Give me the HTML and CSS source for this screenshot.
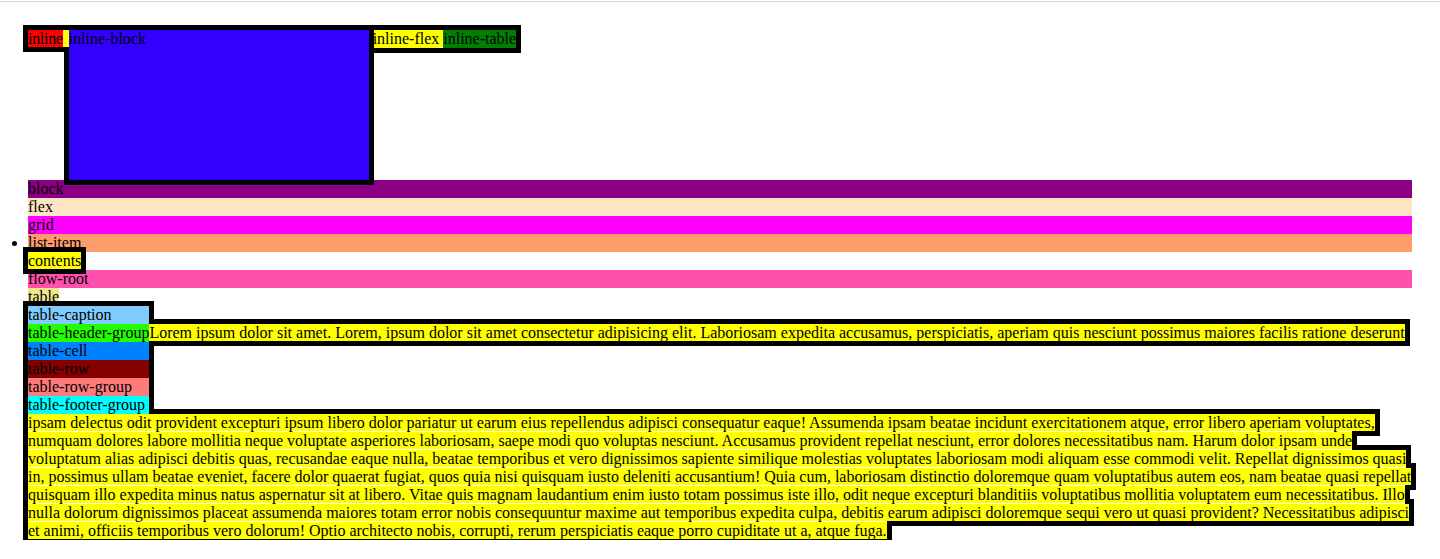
FILE: index.html
```html
<!DOCTYPE html>
<html lang="en">
<head>
<meta charset="utf-8">
<title>CSS display values</title>
<link rel="stylesheet" href="styles.css">
</head>
<body>
<div class="topline"></div>
<main class="page">
  <div class="inline-row"><span class="hl"><span class="d-inline">inline</span><span class="gap"> </span><span class="d-inline-block">inline-block</span> <span class="d-inline-flex">inline-flex</span> <span class="d-inline-table">inline-table</span></span></div>
  <div class="d-block">block</div>
  <div class="d-flex">flex</div>
  <div class="d-grid">grid</div>
  <div class="d-list-item">list-item</div>
  <div class="d-contents"><span class="hl">contents</span></div>
  <div class="d-flow-root">flow-root</div>
  <div class="d-table">table</div>
  <div class="table-area">
    <div class="tcol">
      <div class="trow c-caption">table-caption</div>
      <div class="trow c-header">table-header-group</div>
      <div class="trow c-cell">table-cell</div>
      <div class="trow c-row">table-row</div>
      <div class="trow c-rowgroup">table-row-group</div>
      <div class="trow c-footer">table-footer-group</div>
    </div>
    <div class="tlorem"><span class="hl rel">Lorem ipsum dolor sit amet. Lorem, ipsum dolor sit amet consectetur adipisicing elit. Laboriosam expedita accusamus, perspiciatis, aperiam quis nesciunt possimus maiores facilis ratione deserunt</span></div>
  </div>
  <div class="para"><span class="hl rel">ipsam delectus odit provident excepturi ipsum libero dolor pariatur ut earum eius repellendus adipisci consequatur eaque! Assumenda ipsam beatae incidunt exercitationem atque, error libero aperiam voluptates,<br>numquam dolores labore mollitia neque voluptate asperiores laboriosam, saepe modi quo voluptas nesciunt. Accusamus provident repellat nesciunt, error dolores necessitatibus nam. Harum dolor ipsam unde<br>voluptatum alias adipisci debitis quas, recusandae eaque nulla, beatae temporibus et vero dignissimos sapiente similique molestias voluptates laboriosam modi aliquam esse commodi velit. Repellat dignissimos quasi<br>in, possimus ullam beatae eveniet, facere dolor quaerat fugiat, quos quia nisi quisquam iusto deleniti accusantium! Quia cum, laboriosam distinctio doloremque quam voluptatibus autem eos, nam beatae quasi repellat<br>quisquam illo expedita minus natus aspernatur sit at libero. Vitae quis magnam laudantium enim iusto totam possimus iste illo, odit neque excepturi blanditiis voluptatibus mollitia voluptatem eum necessitatibus. Illo<br>nulla dolorum dignissimos placeat assumenda maiores totam error nobis consequuntur maxime aut temporibus expedita culpa, debitis earum adipisci doloremque sequi vero ut quasi provident? Necessitatibus adipisci<br>et animi, officiis temporibus vero dolorum! Optio architecto nobis, corrupti, rerum perspiciatis eaque porro cupiditate ut a, atque fuga.</span></div>
</main>
</body>
</html>
```
FILE: styles.css
```css
html, body {
  margin: 0;
  background: #fff;
}

body {
  font-family: "Liberation Serif", "Times New Roman", serif;
  font-size: 16px;
  line-height: 18px;
  color: #000;
}

.topline {
  height: 1px;
  margin-top: 1px;
  background: #d6d6d6;
}

.page {
  padding: 28px 28px 0;
}

.hl {
  background: #ffff00;
  outline: 5px solid #000;
}

.rel {
  position: relative;
}

/* first line: inline-level values */
.d-inline {
  position: relative;
  z-index: 2;
  background: #ff0000;
  letter-spacing: -0.3px;
}

.gap {
  position: relative;
  z-index: 2;
  background: #ffff00;
  padding-right: 2px;
}

.d-inline-block {
  display: inline-block;
  position: relative;
  width: 300px;
  height: 150px;
  background: #3300ff;
  outline: 5px solid #000;
}

.d-inline-flex {
  display: inline-flex;
  background: #ffff00;
}

.d-inline-table {
  display: inline-table;
  background: #008000;
}

/* block-level rows */
.d-block {
  background: #8b0082;
}

.d-flex {
  display: flex;
  background: #ffe4c4;
}

.d-grid {
  display: grid;
  background: #ff00ff;
}

.d-list-item {
  display: list-item;
  list-style: disc outside;
  background: #ff9c6c;
}

.d-flow-root {
  display: flow-root;
  background: #ff50ae;
}

.d-table {
  display: table;
  background: #f0e68c;
}

/* table-ish area */
.table-area {
  display: flex;
  align-items: flex-start;
}

.tcol {
  position: relative;
  flex: none;
  outline: 5px solid #000;
}

.trow {
  position: relative;
  z-index: 1;
  white-space: nowrap;
}

.c-caption { background: #80ccff; }
.c-header { background: #20ff00; }
.c-cell { background: #0082ff; }
.c-row { background: #860000; }
.c-rowgroup { background: #ff7b7b; }
.c-footer { background: #00ffff; }

.tlorem {
  flex: 1;
  min-width: 0;
  padding-top: 18px;
  white-space: nowrap;
}

.para {
  white-space: nowrap;
}
```
